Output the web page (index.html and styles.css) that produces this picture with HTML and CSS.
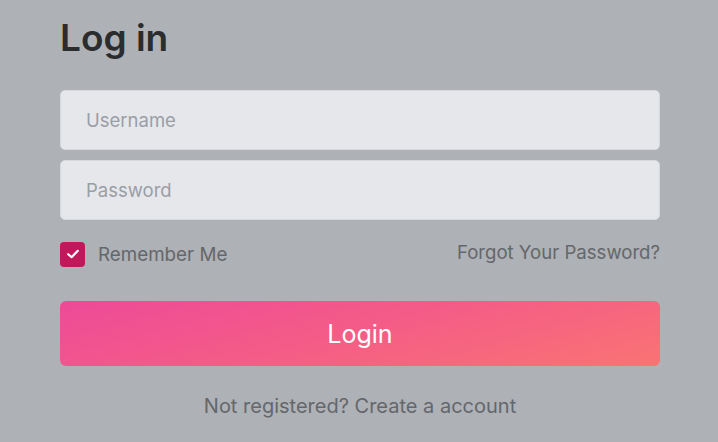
FILE: index.html
```html
<!DOCTYPE html>
<html lang="en">
<head>
<meta charset="utf-8">
<title>Log in</title>
<link rel="stylesheet" href="styles.css">
</head>
<body>
<main class="login">
  <h1 class="title">Log in</h1>
  <form class="form">
    <input class="field" type="text" placeholder="Username">
    <input class="field" type="password" placeholder="Password">
    <div class="options">
      <label class="remember">
        <span class="check">
          <svg width="16" height="16" viewBox="0 0 16 16"><path d="M3.2 8.2 L6.6 11.2 L12.8 4.8" fill="none" stroke="#fff" stroke-width="2.2" stroke-linecap="round" stroke-linejoin="round"/></svg>
        </span>
        <span>Remember Me</span>
      </label>
      <a class="forgot" href="#">Forgot Your Password?</a>
    </div>
    <button class="submit" type="button">Login</button>
    <p class="register">Not registered? <a href="#">Create a account</a></p>
  </form>
</main>
</body>
</html>
```

FILE: styles.css
```css
* { box-sizing: border-box; }
html, body { margin: 0; height: 100%; }
body {
  background: #aeb1b5;
  font-family: Inter, "Noto Sans", sans-serif;
  overflow: hidden;
}
.login {
  width: 600px;
  margin-left: 60px;
  padding-top: 14px;
}
.title {
  margin: 0;
  font-size: 37px;
  font-weight: 600;
  line-height: 48px;
  color: #2b2c2e;
}
.form {
  margin-top: 28px;
  display: flex;
  flex-direction: column;
}
.field {
  height: 60px;
  width: 100%;
  border: 1px solid #d7d9dd;
  border-radius: 5px;
  background: #e6e7eb;
  padding: 0 25px;
  font-family: inherit;
  font-size: 18.5px;
  color: #333;
  margin-bottom: 10px;
  outline: none;
}
.field::placeholder { color: #9a9ea6; }
.options {
  display: flex;
  justify-content: space-between;
  align-items: center;
  margin-top: 0;
  height: 48px;
}
.remember {
  display: flex;
  align-items: center;
  gap: 13px;
  font-size: 18.8px;
  color: #64676c;
}
.check {
  width: 25px;
  height: 25px;
  border-radius: 4px;
  background: #c2185b;
  display: flex;
  align-items: center;
  justify-content: center;
}
.forgot {
  font-size: 18.6px;
  color: #64676c;
  text-decoration: none;
  margin-top: -4px;
}
.submit {
  margin-top: 23px;
  height: 65px;
  border: none;
  border-radius: 6px;
  background: linear-gradient(165deg, #ee4a98 0%, #f45d86 50%, #fa7373 100%);
  color: #fff;
  font-family: inherit;
  font-size: 25px;
  font-weight: 400;
}
.register {
  margin: 28px 0 0;
  text-align: center;
  font-size: 20px;
  color: #64676c;
}
.register a { color: inherit; text-decoration: none; }
```
